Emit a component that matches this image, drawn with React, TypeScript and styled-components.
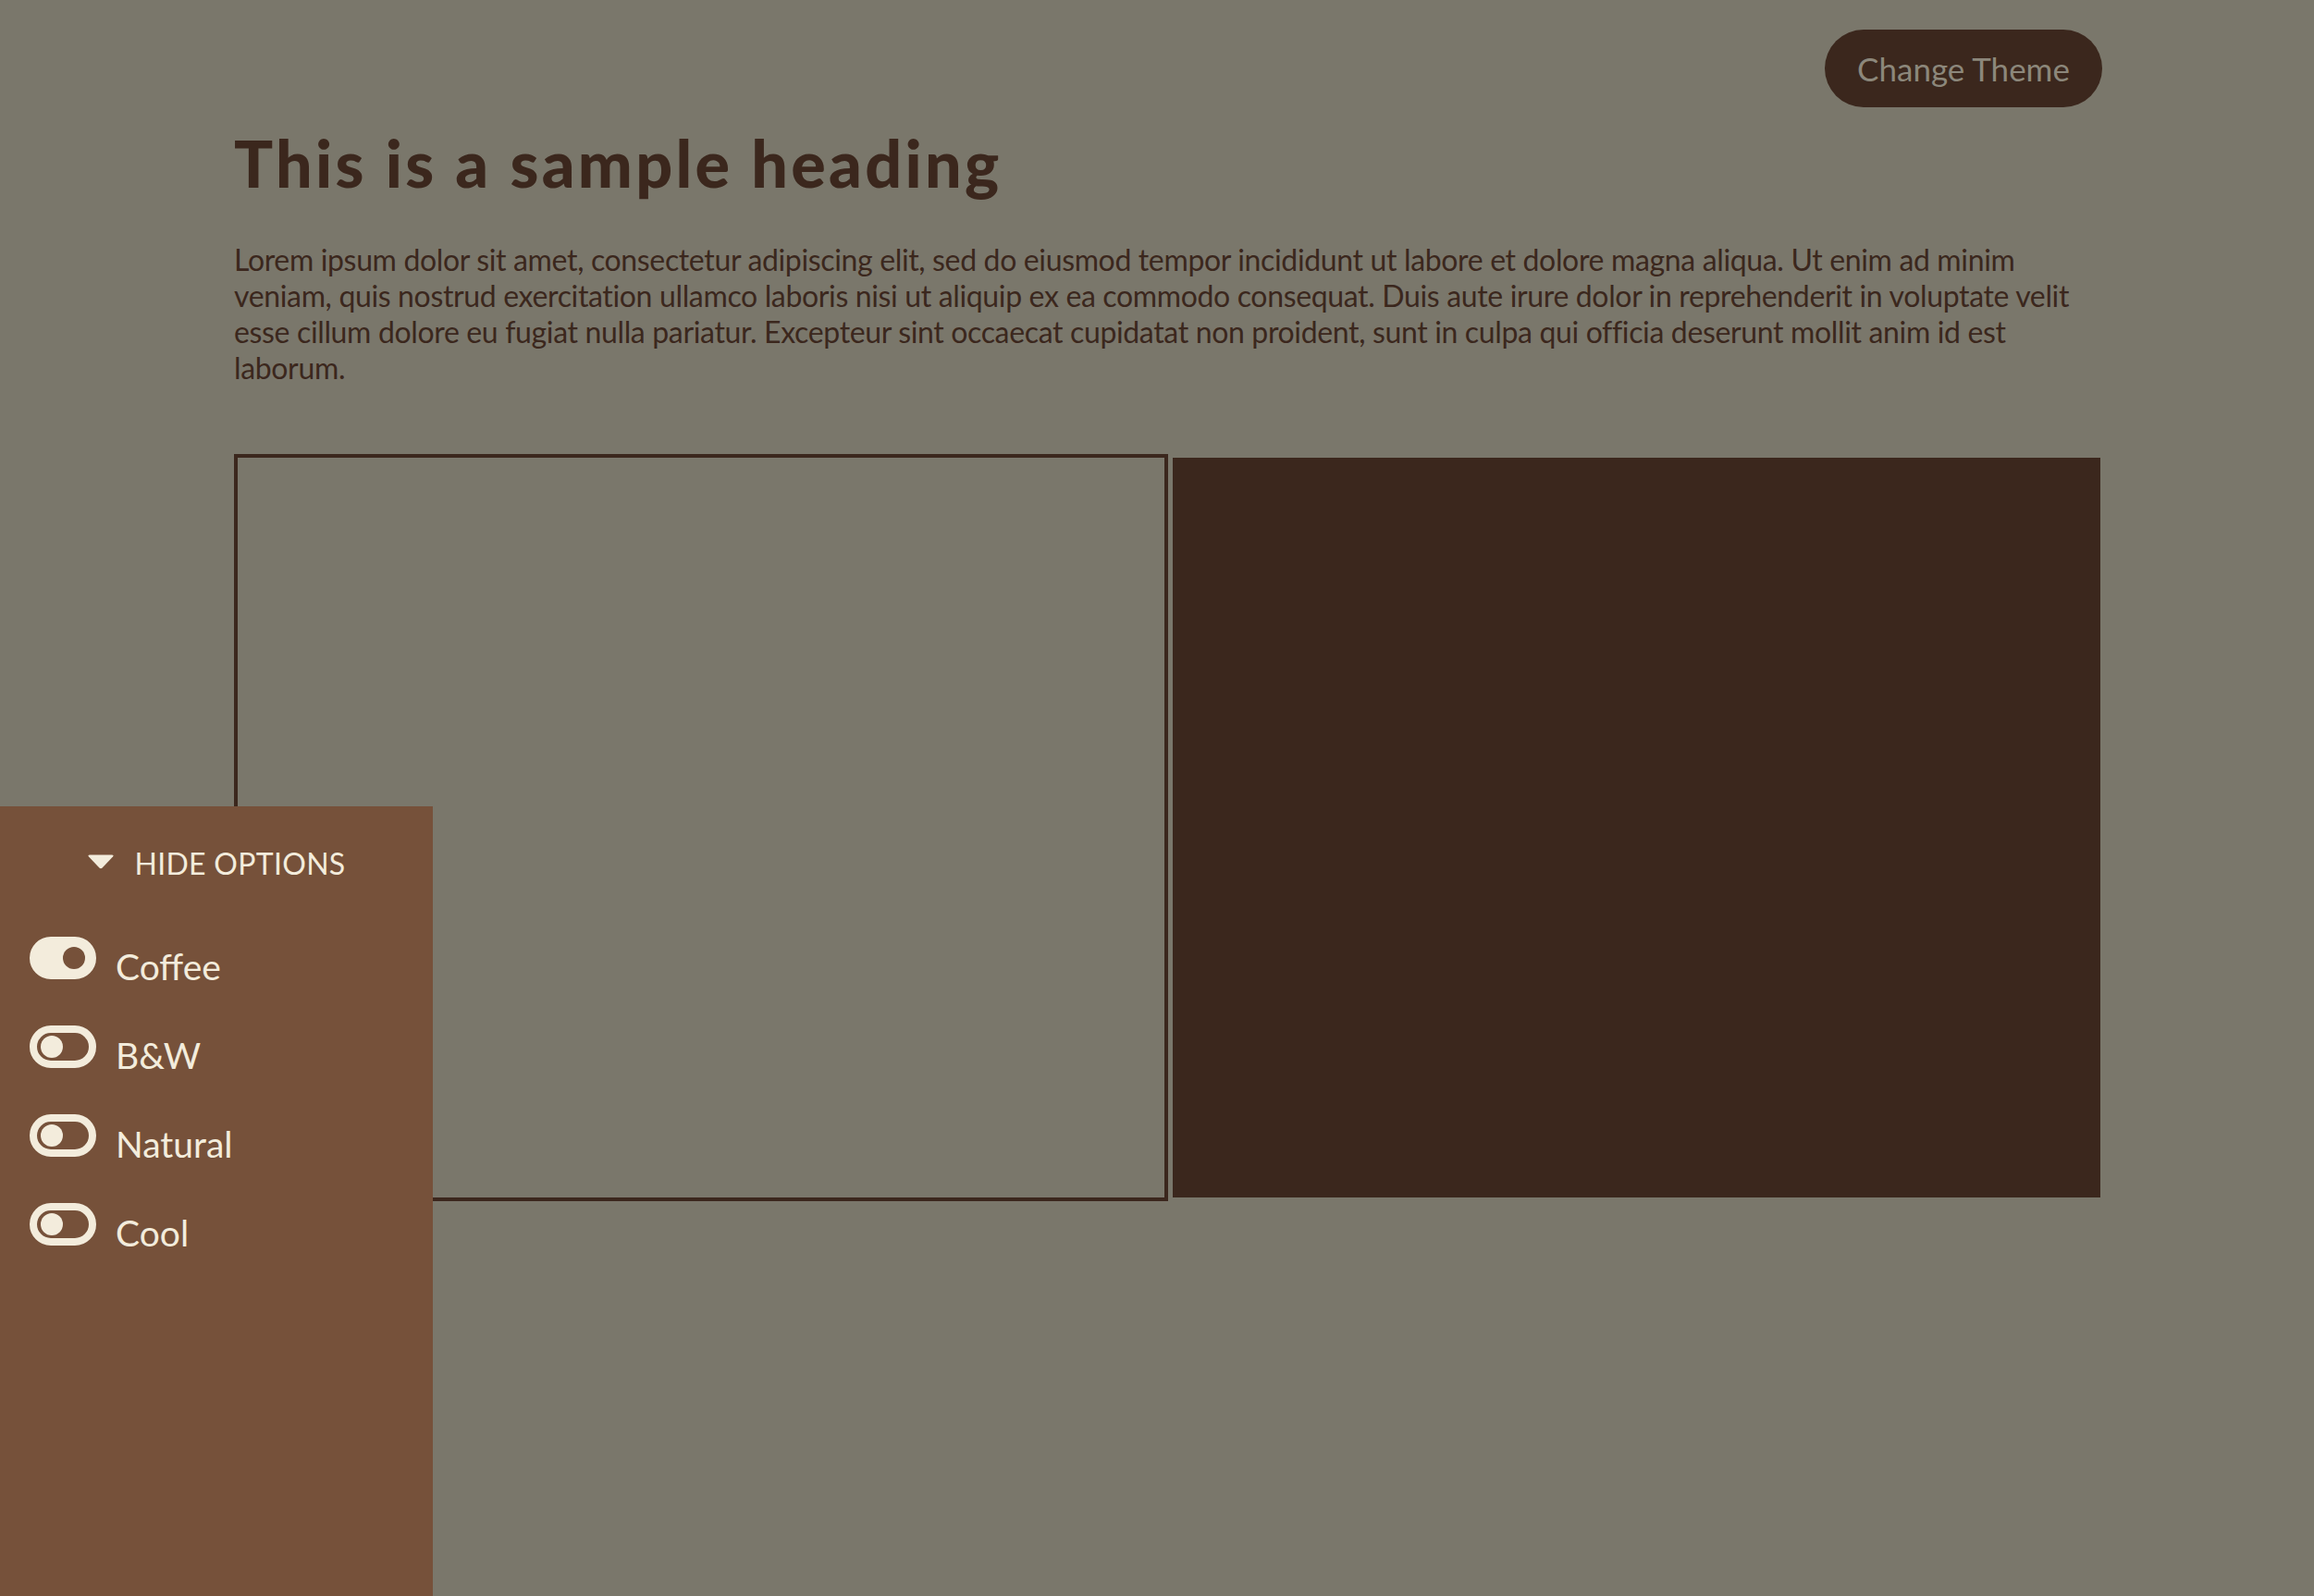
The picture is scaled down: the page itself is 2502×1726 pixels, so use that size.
import React, { useState } from "react";
import styled, { createGlobalStyle } from "styled-components";

const GlobalStyle = createGlobalStyle`
  html, body {
    margin: 0;
    padding: 0;
    background: #7a776b;
  }
  body {
    min-height: 100vh;
    font-family: "Lato", "Liberation Sans", sans-serif;
  }
  * { box-sizing: border-box; }
`;

const Page = styled.div`
  min-height: 1726px;
  background: #7a776b;
`;

const Main = styled.main`
  width: 2020px;
  margin-left: 253px;
  padding-top: 32px;
`;

const TopBar = styled.div`
  display: flex;
  justify-content: flex-end;
`;

const ThemeButton = styled.button`
  width: 300px;
  height: 84px;
  border: none;
  border-radius: 42px;
  background: #3b271d;
  color: #8c877b;
  font-family: "Lato", "Liberation Sans", sans-serif;
  font-size: 35px;
  font-weight: 400;
  cursor: pointer;
`;

const Heading = styled.h1`
  margin: 20px 0 0;
  font-family: "Lato", "Liberation Sans", sans-serif;
  font-weight: 900;
  font-size: 70px;
  line-height: 80px;
  color: #3b271d;
  letter-spacing: 3.3px;
`;

const Paragraph = styled.p`
  margin: 45px 0 0;
  font-family: "Lato", "Liberation Sans", sans-serif;
  font-size: 32px;
  line-height: 39px;
  color: #3b271d;
  letter-spacing: -0.35px;
`;

const Gallery = styled.div`
  display: flex;
  align-items: center;
  gap: 5px;
  margin-top: 74px;
`;

const FramedBox = styled.div`
  width: 1010px;
  height: 808px;
  border: 4px solid #3b271d;
`;

const SolidBox = styled.div`
  width: 1003px;
  height: 800px;
  background: #3b271d;
`;

const Panel = styled.aside`
  position: fixed;
  left: 0;
  top: 872px;
  width: 468px;
  height: 854px;
  background: #76513a;
  padding-top: 42px;
  color: #f3ecdc;
`;

const PanelHeader = styled.div`
  display: flex;
  justify-content: center;
  align-items: flex-start;
  gap: 21px;
  height: 40px;
  font-family: "Lato", "Liberation Sans", sans-serif;
  font-size: 32px;
  line-height: 40px;
  letter-spacing: 0.3px;
  cursor: pointer;
`;

const Caret = styled.svg`
  width: 30px;
  height: 17px;
  margin-top: 9px;
  flex: none;
`;

const OptionList = styled.ul`
  list-style: none;
  margin: 59px 0 0;
  padding: 0 0 0 32px;
  display: flex;
  flex-direction: column;
  gap: 50px;
`;

const OptionRow = styled.li`
  display: flex;
  align-items: flex-start;
  gap: 21px;
  height: 46px;
  cursor: pointer;
`;

const Toggle = styled.span<{ $on: boolean }>`
  position: relative;
  flex: none;
  width: 72px;
  height: 46px;
  border-radius: 23px;
  border: 8px solid #f3ecdc;
  background: ${(p) => (p.$on ? "#f3ecdc" : "transparent")};
`;

const Knob = styled.span<{ $on: boolean }>`
  position: absolute;
  top: 3px;
  left: ${(p) => (p.$on ? "28px" : "4px")};
  width: 24px;
  height: 24px;
  border-radius: 50%;
  background: ${(p) => (p.$on ? "#76513a" : "#f3ecdc")};
`;

const OptionLabel = styled.span`
  margin-top: 9px;
  font-family: "Lato", "Liberation Sans", sans-serif;
  font-size: 39px;
  line-height: 46px;
  color: #f3ecdc;
`;

const options = ["Coffee", "B&W", "Natural", "Cool"];

export default function App() {
  const [active, setActive] = useState("Coffee");
  return (
    <Page>
      <GlobalStyle />
      <Main>
        <TopBar>
          <ThemeButton>Change Theme</ThemeButton>
        </TopBar>
        <Heading>This is a sample heading</Heading>
        <Paragraph>
          Lorem ipsum dolor sit amet, consectetur adipiscing elit, sed do eiusmod tempor incididunt ut
          labore et dolore magna aliqua. Ut enim ad minim veniam, quis nostrud exercitation ullamco
          laboris nisi ut aliquip ex ea commodo consequat. Duis aute irure dolor in reprehenderit in
          voluptate velit esse cillum dolore eu fugiat nulla pariatur. Excepteur sint occaecat
          cupidatat non proident, sunt in culpa qui officia deserunt mollit anim id est laborum.
        </Paragraph>
        <Gallery>
          <FramedBox />
          <SolidBox />
        </Gallery>
      </Main>
      <Panel>
        <PanelHeader>
          <Caret viewBox="0 0 30 17">
            <path d="M3 1.5 H27 Q29.5 1.5 28 3.5 L16.6 15.6 Q15 17 13.4 15.6 L2 3.5 Q0.5 1.5 3 1.5 Z" fill="#f3ecdc" />
          </Caret>
          <span>HIDE OPTIONS</span>
        </PanelHeader>
        <OptionList>
          {options.map((o) => (
            <OptionRow key={o} onClick={() => setActive(o)}>
              <Toggle $on={active === o}>
                <Knob $on={active === o} />
              </Toggle>
              <OptionLabel>{o}</OptionLabel>
            </OptionRow>
          ))}
        </OptionList>
      </Panel>
    </Page>
  );
}
